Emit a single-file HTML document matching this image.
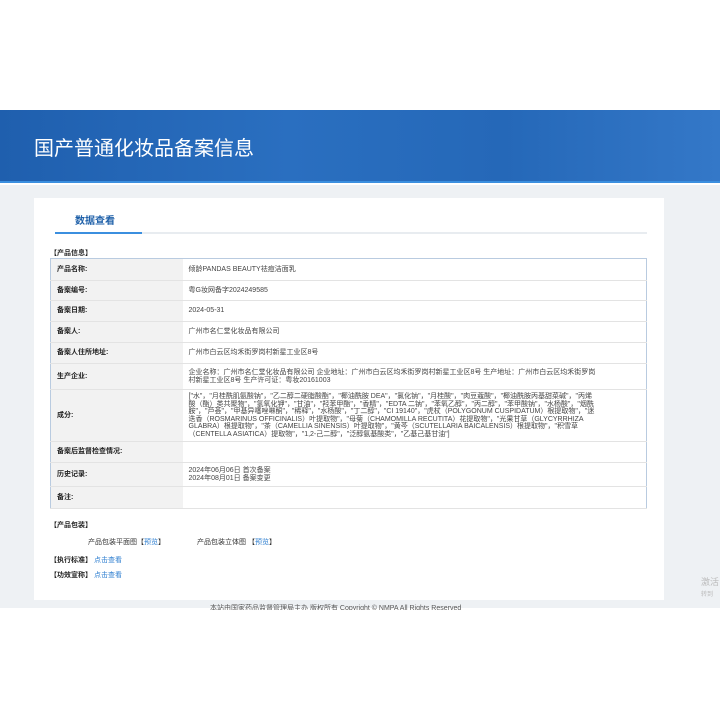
<!DOCTYPE html>
<html><head><meta charset="utf-8"><style>
*{margin:0;padding:0;box-sizing:border-box}
body{width:720px;height:720px;background:#fff;font-family:"Liberation Sans","Noto Sans CJK SC",sans-serif;position:relative;overflow:hidden;color:#333}
.banner{position:absolute;left:0;top:110px;width:720px;height:73px;background:linear-gradient(90deg,#1f5fae 0%,#2a6fc0 40%,#2568b8 70%,#3478c8 100%);border-bottom:2px solid #3b8fdf}
.banner h1{position:absolute;left:34px;top:22px;font-size:20px;font-weight:normal;color:#fff}
.gray{position:absolute;left:0;top:185px;width:720px;height:423px;background:#eef1f4}
.card{position:absolute;left:34px;top:198px;width:630px;height:402px;background:#fff}
.tab{position:absolute;left:75px;top:212px;font-size:10px;color:#1d5fa8;font-weight:bold}
.tabline{position:absolute;left:55px;top:232px;width:592px;height:2px;background:#e8ecf0}
.tabline i{position:absolute;left:0;top:0;width:87px;height:2px;background:#3b8fdf}
.sec{position:absolute;font-size:7px;font-weight:bold;color:#222}
table{position:absolute;left:50px;top:258px;width:597px;border-collapse:collapse;border:1px solid #b9cbe0;font-size:7px}
td{border-bottom:1px solid #e3e3e3;padding:0 50px 0 6px;vertical-align:middle;line-height:7.5px;color:#444}
td.l{width:132px;background:#f2f2f2;font-weight:bold;color:#222;padding:0 6px}
a{color:#2f7fd0;text-decoration:none}
.t{position:absolute;font-size:7px;color:#333}
</style></head><body>
<div class="banner"><h1>国产普通化妆品备案信息</h1></div>
<div class="gray"></div>
<div class="card"></div>
<div class="tab">数据查看</div>
<div class="tabline"><i></i></div>
<div class="sec" style="left:50px;top:248px">【产品信息】</div>
<table>
<tr style="height:22px"><td class="l">产品名称:</td><td>倾龄PANDAS BEAUTY祛痘洁面乳</td></tr>
<tr style="height:20px"><td class="l">备案编号:</td><td>粤G妆网备字2024249585</td></tr>
<tr style="height:21px"><td class="l">备案日期:</td><td>2024-05-31</td></tr>
<tr style="height:21px"><td class="l">备案人:</td><td>广州市名仁堂化妆品有限公司</td></tr>
<tr style="height:21px"><td class="l">备案人住所地址:</td><td>广州市白云区均禾街罗岗村新星工业区8号</td></tr>
<tr style="height:26px"><td class="l">生产企业:</td><td>企业名称：广州市名仁堂化妆品有限公司 企业地址：广州市白云区均禾街罗岗村新星工业区8号 生产地址：广州市白云区均禾街罗岗村新星工业区8号 生产许可证：粤妆20161003</td></tr>
<tr style="height:52px"><td class="l">成分:</td><td>["水"，"月桂酰肌氨酸钠"，"乙二醇二硬脂酸酯"，"椰油酰胺 DEA"，"氯化钠"，"月桂酸"，"肉豆蔻酸"，"椰油酰胺丙基甜菜碱"，"丙烯酸（酯）类共聚物"，"氢氧化钾"，"甘油"，"羟苯甲酯"，"香精"，"EDTA 二钠"，"苯氧乙醇"，"丙二醇"，"苯甲酸钠"，"水杨酸"，"烟酰胺"，"芦荟"，"甲基异噻唑啉酮"，"稀释"，"水杨酸"，"丁二醇"，"CI 19140"，"虎杖（POLYGONUM CUSPIDATUM）根提取物"，"迷迭香（ROSMARINUS OFFICINALIS）叶提取物"，"母菊（CHAMOMILLA RECUTITA）花提取物"，"光果甘草（GLYCYRRHIZA GLABRA）根提取物"，"茶（CAMELLIA SINENSIS）叶提取物"，"黄芩（SCUTELLARIA BAICALENSIS）根提取物"，"积雪草（CENTELLA ASIATICA）提取物"，"1,2-己二醇"，"泛醇氨基酸类"，"乙基己基甘油"]</td></tr>
<tr style="height:21px"><td class="l">备案后监督检查情况:</td><td></td></tr>
<tr style="height:24px"><td class="l">历史记录:</td><td>2024年06月06日 首次备案<br>2024年08月01日 备案变更</td></tr>
<tr style="height:22px"><td class="l">备注:</td><td></td></tr>
</table>
<div class="sec" style="left:50px;top:520px">【产品包装】</div>
<div class="t" style="left:88px;top:537px">产品包装平面图【<a>预览</a>】</div>
<div class="t" style="left:197px;top:537px">产品包装立体图 【<a>预览</a>】</div>
<div class="sec" style="left:50px;top:555px">【执行标准】 <a style="font-weight:normal">点击查看</a></div>
<div class="sec" style="left:50px;top:570px">【功效宣称】 <a style="font-weight:normal">点击查看</a></div>
<div class="t" style="left:210px;top:603px;font-size:7px;color:#555">本站由国家药品监督管理局主办 版权所有 Copyright © NMPA All Rights Reserved</div>
<div style="position:absolute;left:0;top:610px;width:720px;height:110px;background:#fff"></div>
<div class="t" style="left:701px;top:575px;font-size:9px;color:#bbb">激活</div>
<div class="t" style="left:701px;top:589px;font-size:6px;color:#bbb">转到</div>
</body></html>
